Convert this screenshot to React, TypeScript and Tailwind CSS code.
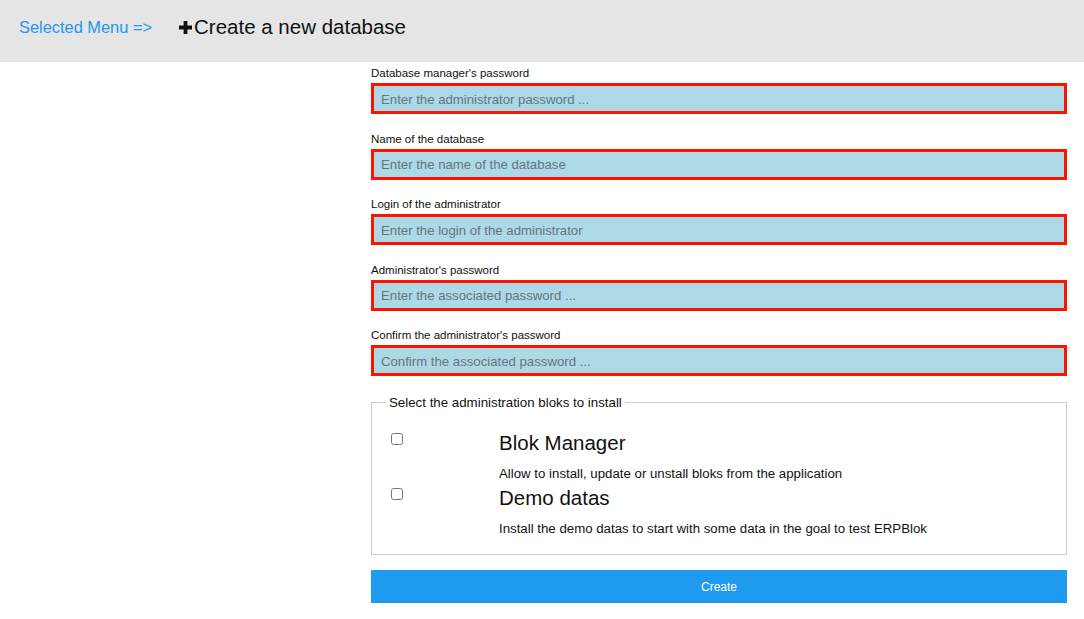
import React from "react";

const fields = [
  { label: "Database manager's password", placeholder: "Enter the administrator password ...", type: "password" },
  { label: "Name of the database", placeholder: "Enter the name of the database", type: "text" },
  { label: "Login of the administrator", placeholder: "Enter the login of the administrator", type: "text" },
  { label: "Administrator's password", placeholder: "Enter the associated password ...", type: "password" },
  { label: "Confirm the administrator's password", placeholder: "Confirm the associated password ...", type: "password" },
];

const bloks = [
  { title: "Blok Manager", description: "Allow to install, update or unstall bloks from the application" },
  { title: "Demo datas", description: "Install the demo datas to start with some data in the goal to test ERPBlok" },
];

export default function App() {
  return (
    <div className="min-h-[619px] bg-white text-[#222] font-['Liberation_Sans',Arial,sans-serif]">
      {/* Header */}
      <header className="flex h-[62px] items-center bg-[#e5e5e5] px-[19px] pb-[8px]">
        <span className="text-[16.4px] text-[#2196f3]">Selected Menu =&gt;</span>
        <span className="ml-[26px] flex items-center text-[20.5px] text-[#111]">
          <svg width="15" height="15" viewBox="0 0 15 15" className="mr-[1px]">
            <path d="M5.6 1h3.8v4.6H14v3.8H9.4V14H5.6V9.4H1V5.6h4.6z" fill="#111" />
          </svg>
          Create a new database
        </span>
      </header>

      {/* Form */}
      <div className="flex">
        <div className="w-[371px] shrink-0" />
        <form className="w-[696px] pt-[4px]" onSubmit={(e) => e.preventDefault()}>
          <div className="flex flex-col gap-[17.6px]">
            {fields.map((f) => (
              <div key={f.label} className="flex flex-col">
                <label className="mb-[3px] text-[11.5px] leading-[14px] text-[#111]">{f.label}</label>
                <input
                  type={f.type}
                  placeholder={f.placeholder}
                  className="h-[31px] w-full border-[3px] border-[#ff1200] bg-[#add8e6] px-[7px] pt-[1px] text-[13.2px] outline-none placeholder:text-[#637680]"
                />
              </div>
            ))}
          </div>

          <fieldset className="mt-[19px] border border-[#cccccc] px-[19px] pt-[22px] pb-[16px]">
            <legend className="ml-[-5px] px-[3px] text-[13.3px] leading-[15px] text-[#111]">
              Select the administration bloks to install
            </legend>
            <div className="flex flex-col gap-[4px]">
              {bloks.map((b) => (
                <div key={b.title} className="flex">
                  <div className="w-[108px] shrink-0 pt-[1px]">
                    <input type="checkbox" className="m-0 block h-[12px] w-[12px]" />
                  </div>
                  <div className="flex flex-col">
                    <span className="text-[20.5px] leading-[22px] text-[#111]">{b.title}</span>
                    <span className="mt-[11px] text-[13.25px] leading-[18px] text-[#111]">{b.description}</span>
                  </div>
                </div>
              ))}
            </div>
          </fieldset>

          <button
            type="submit"
            className="mt-[15px] h-[33px] w-full bg-[#1e9aef] text-[12px] text-white"
          >
            Create
          </button>
        </form>
      </div>
    </div>
  );
}
